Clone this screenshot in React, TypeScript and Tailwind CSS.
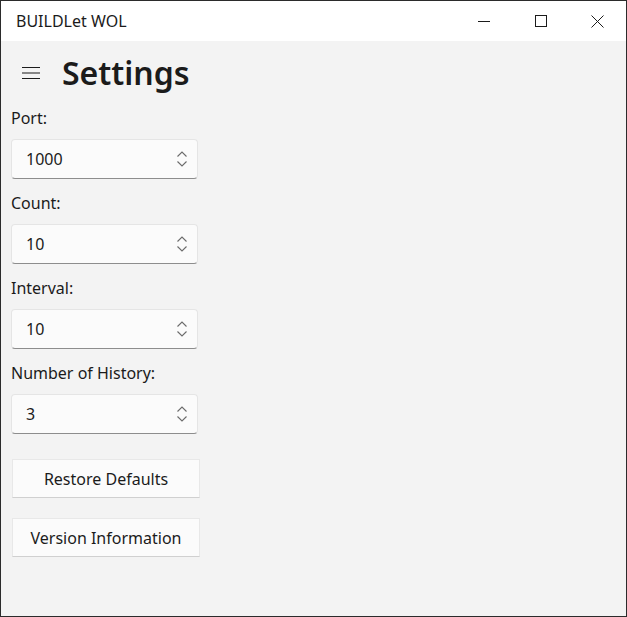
import React from 'react';

const font = { fontFamily: '"Segoe UI", "Noto Sans", "Open Sans", sans-serif' };

interface NumberBoxProps {
  label: string;
  value: string;
}

const NumberBox: React.FC<NumberBoxProps> = ({ label, value }) => (
  <div className="flex flex-col">
    <div className="h-[33px] text-[16px] leading-[22px] text-[#1b1b1b] pt-[1px]">{label}</div>
    <div className="w-[187px] h-[40px] rounded-[4px] bg-[#fbfbfb] border border-[#e5e5e5] border-b-[#8d8d8d] flex items-center justify-between pl-[14px] pr-[9px]">
      <span className="text-[16px] text-[#1b1b1b]">{value}</span>
      <svg width="12" height="18" viewBox="0 0 12 18" fill="none" stroke="#6b6b6b" strokeWidth="1.1">
        <path d="M1.5 6.5 L6 2 L10.5 6.5" />
        <path d="M1.5 11.5 L6 16 L10.5 11.5" />
      </svg>
    </div>
  </div>
);

const PlainButton: React.FC<{ label: string }> = ({ label }) => (
  <button className="w-[188px] h-[39px] bg-[#fbfbfb] border border-[#e8e8e8] border-b-[#d0d0d0] text-[16px] text-[#1b1b1b] flex items-center justify-center">
    {label}
  </button>
);

export default function App() {
  const fields = [
    { label: 'Port:', value: '1000' },
    { label: 'Count:', value: '10' },
    { label: 'Interval:', value: '10' },
    { label: 'Number of History:', value: '3' },
  ];

  return (
    <div className="w-[627px] h-[617px] border border-[#2b2b2b] flex flex-col bg-[#f3f3f3]" style={font}>
      {/* title bar */}
      <div className="h-[40px] bg-white flex items-center shrink-0">
        <span className="pl-[15px] text-[16px] text-[#1b1b1b] flex-1">BUILDLet WOL</span>
        <div className="flex h-full">
          <div className="w-[57px] h-full flex items-center justify-center">
            <svg width="12" height="12" viewBox="0 0 12 12" stroke="#1b1b1b" strokeWidth="1">
              <path d="M0 6.5 H12" />
            </svg>
          </div>
          <div className="w-[57px] h-full flex items-center justify-center">
            <svg width="12" height="12" viewBox="0 0 12 12" fill="none" stroke="#1b1b1b" strokeWidth="1">
              <rect x="0.5" y="0.5" width="11" height="11" />
            </svg>
          </div>
          <div className="w-[57px] h-full flex items-center justify-center">
            <svg width="13" height="13" viewBox="0 0 13 13" fill="none" stroke="#1b1b1b" strokeWidth="1">
              <path d="M0.5 0.5 L12.5 12.5 M12.5 0.5 L0.5 12.5" />
            </svg>
          </div>
        </div>
      </div>

      {/* header */}
      <div className="flex items-center h-[64px] pl-[21px] shrink-0">
        <svg width="18" height="14" viewBox="0 0 18 14" stroke="#1b1b1b" strokeWidth="1.2">
          <path d="M0 1.5 H18 M0 7 H18 M0 12.5 H18" />
        </svg>
        <span className="ml-[22px] text-[32px] font-semibold text-[#1b1b1b] leading-none">Settings</span>
      </div>

      {/* body */}
      <div className="flex flex-col pl-[10px] pt-[1px] gap-[12px]">
        {fields.map((f) => (
          <NumberBox key={f.label} label={f.label} value={f.value} />
        ))}
        <div className="flex flex-col gap-[20px] mt-[13px] pl-[1px]">
          <PlainButton label="Restore Defaults" />
          <PlainButton label="Version Information" />
        </div>
      </div>
    </div>
  );
}
